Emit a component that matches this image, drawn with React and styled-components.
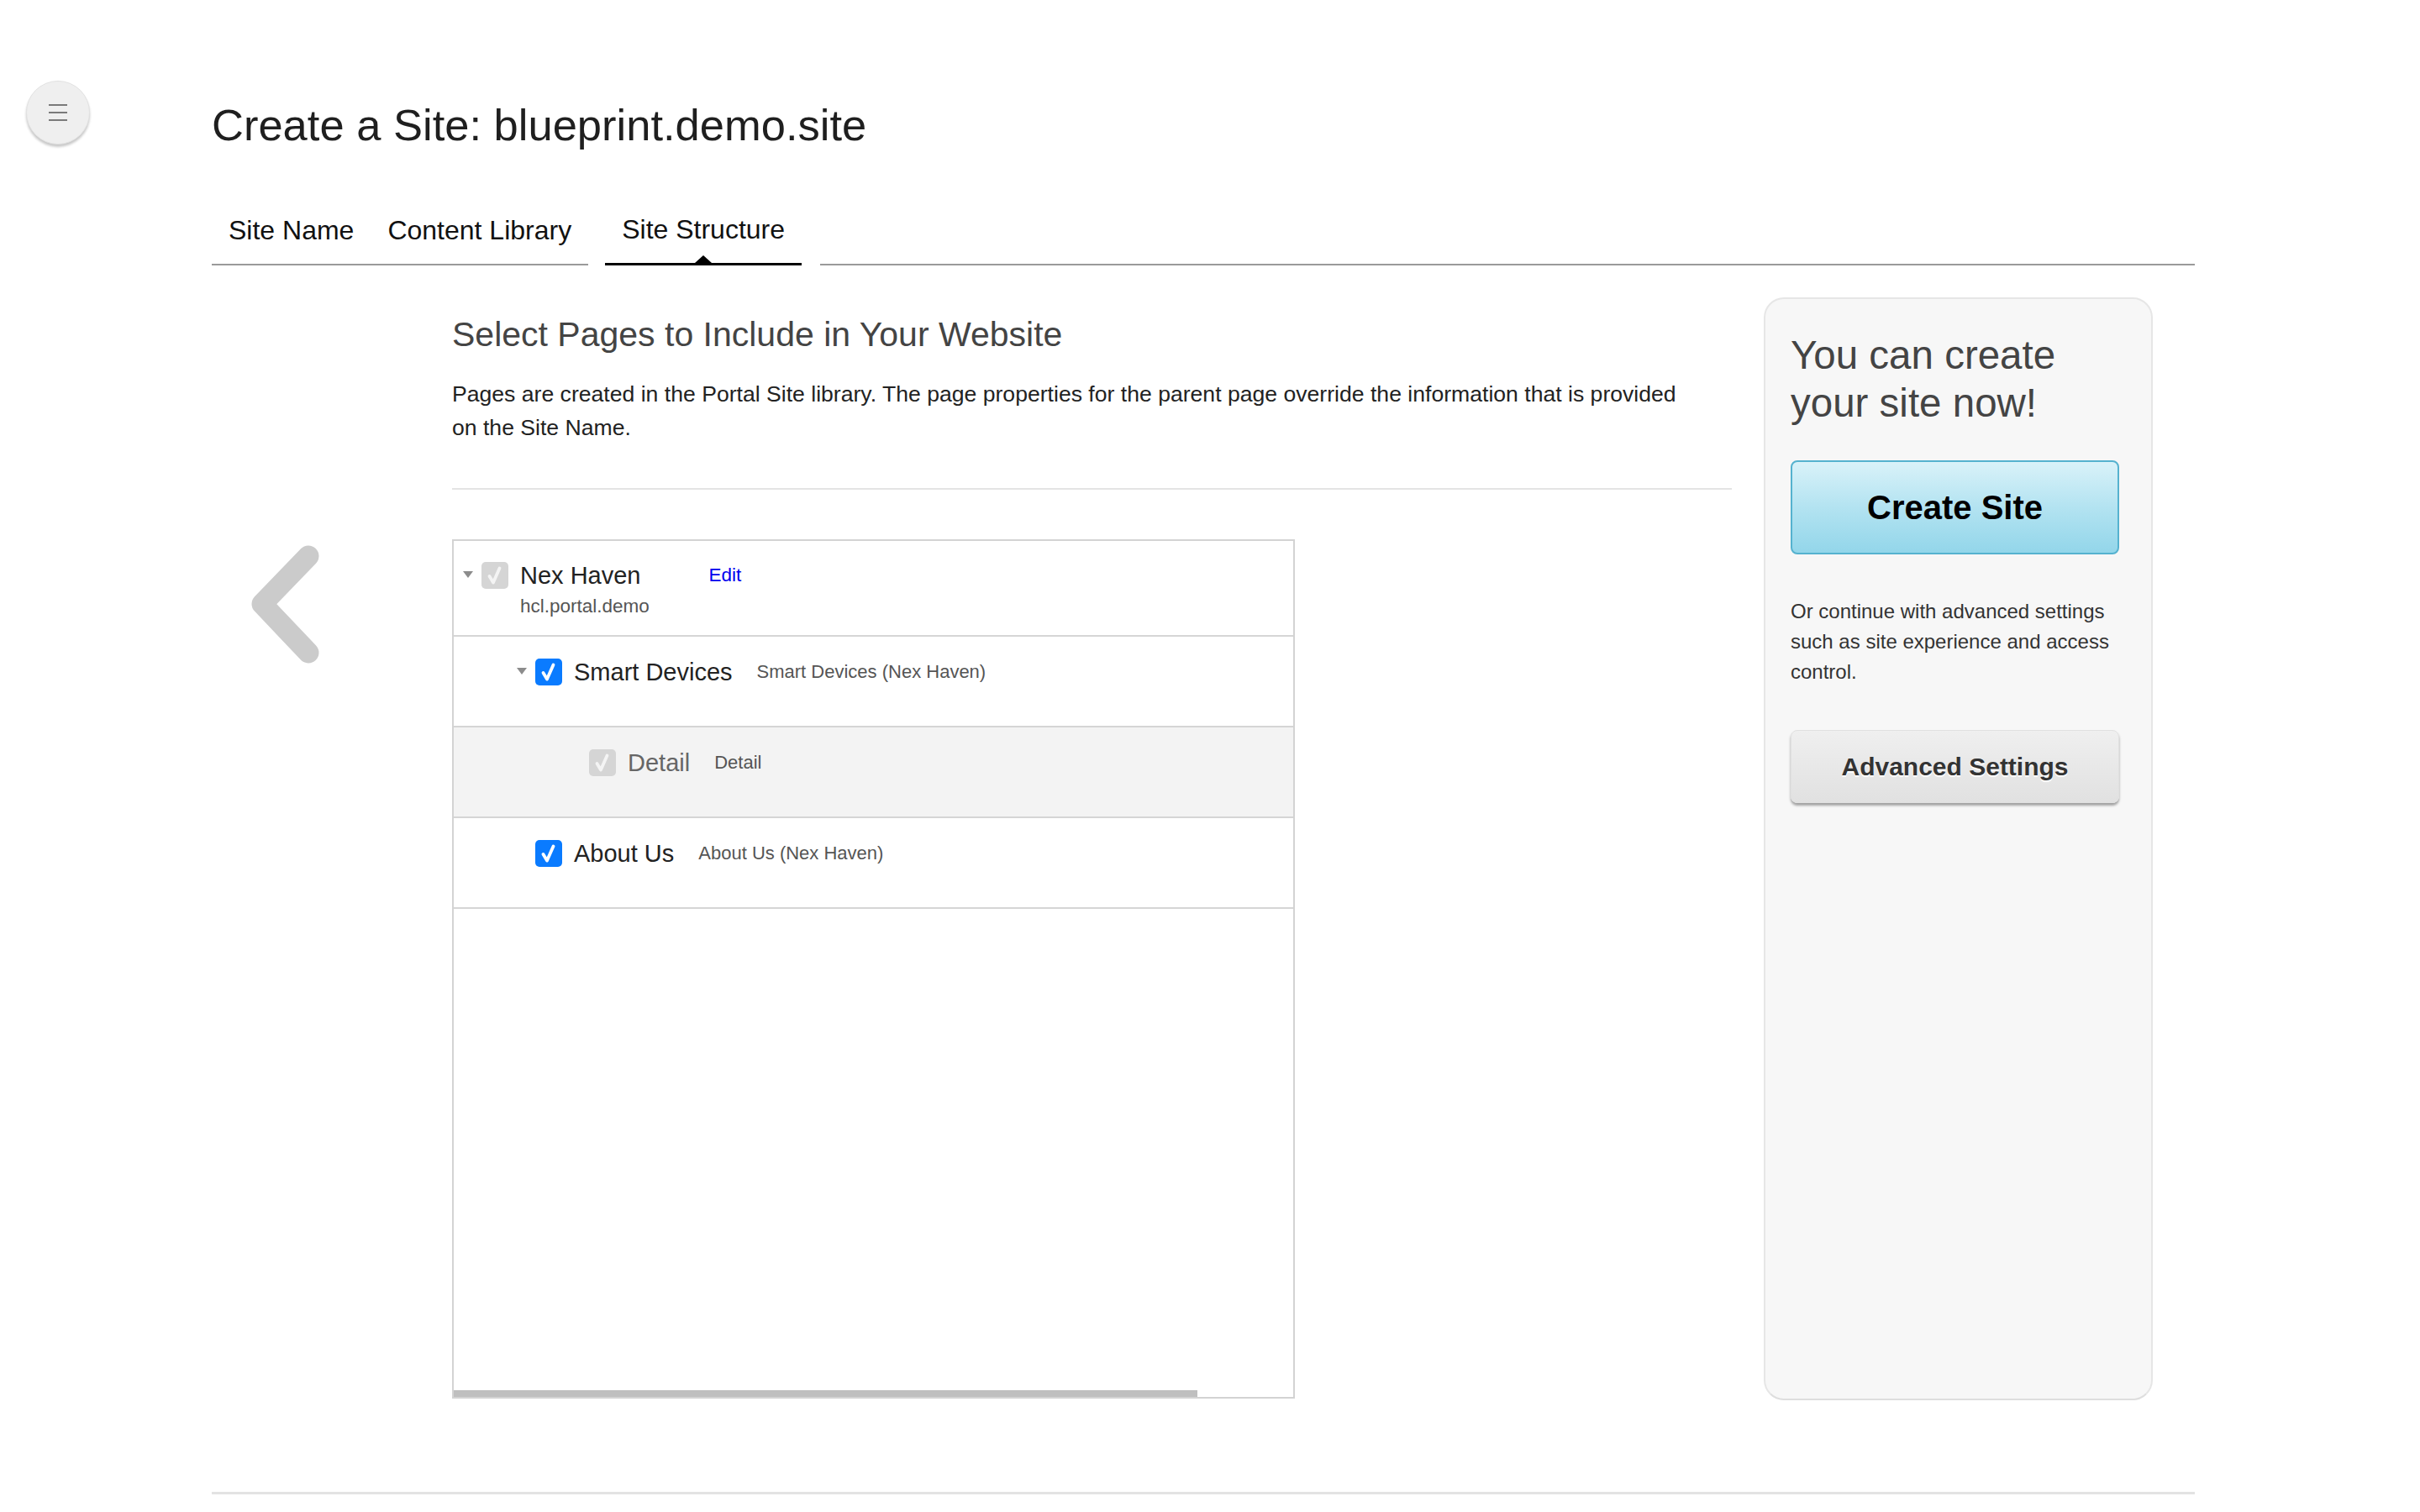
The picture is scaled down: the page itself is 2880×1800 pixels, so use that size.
import styled, { createGlobalStyle } from "styled-components";

const GlobalStyle = createGlobalStyle`
body {
  margin: 0;
  background: #ffffff;
  font-family: "Liberation Sans", Arial, Helvetica, sans-serif;
  color: #222222;
}
* { box-sizing: border-box; }
`;

const Page = styled.div`
display: flex;
flex-direction: row;
min-height: 1800px;
`;

const Rail = styled.div`
width: 252px;
flex-shrink: 0;
padding: 96px 0 0 31px;
`;

const MenuButton = styled.button`
width: 76px;
height: 76px;
border-radius: 50%;
border: 1px solid #e2e2e2;
background: #efefef;
box-shadow: 0 3px 3px rgba(0, 0, 0, 0.22);
display: flex;
flex-direction: column;
justify-content: center;
align-items: center;
gap: 7px;
padding: 0;
cursor: pointer;

span {
  display: block;
  width: 22px;
  height: 2px;
  background: #7a7a7a;
}
`;

const Content = styled.div`
width: 2360px;
padding-top: 119px;
display: flex;
flex-direction: column;
`;

const Title = styled.h1`
margin: 0;
font-size: 52.5px;
line-height: 60px;
font-weight: normal;
color: #1f1f1f;
`;

const TabBar = styled.div`
margin-top: 74px;
display: flex;
flex-direction: row;
align-items: flex-end;
`;

const Tab = styled.div`
position: relative;
padding: 0 20px 20px;
font-size: 32px;
line-height: 40px;
color: #111111;
border-bottom: ${p => (p.$active ? "3px solid #000000" : "2px solid #9a9a9a")};
margin: ${p => (p.$active ? "0 22px 0 20px" : "0")};

&::after {
  content: "";
  display: ${p => (p.$active ? "block" : "none")};
  position: absolute;
  left: 50%;
  bottom: 0;
  transform: translateX(-50%);
  border-left: 10px solid transparent;
  border-right: 10px solid transparent;
  border-bottom: 9px solid #000000;
}
`;

const TabFiller = styled.div`
flex: 1;
border-bottom: 2px solid #9a9a9a;
`;

const Main = styled.div`
display: flex;
flex-direction: row;
align-items: flex-start;
`;

const BackColumn = styled.div`
width: 286px;
flex-shrink: 0;
padding: 333px 0 0 45px;
`;

const Body = styled.div`
width: 1523px;
flex-shrink: 0;
padding-top: 58px;
`;

const SectionTitle = styled.h2`
margin: 0;
font-size: 41px;
line-height: 48px;
font-weight: normal;
color: #444444;
`;

const Intro = styled.p`
margin: 27px 0 0 0;
max-width: 1480px;
font-size: 26.6px;
line-height: 40px;
color: #222222;
`;

const Divider = styled.hr`
margin: 52px 0 0 0;
border: none;
border-top: 2px solid #e4e4e4;
`;

const TreeBox = styled.div`
margin-top: 59px;
width: 1003px;
height: 1023px;
border: 2px solid #d3d3d3;
display: flex;
flex-direction: column;
`;

const Row = styled.div`
display: flex;
flex-direction: column;
padding: ${p => (p.$first ? "21px 0 19px" : "22px 0 44px")};
padding-left: ${p => 11 + p.$level * 64}px;
background: ${p => (p.$shaded ? "#f3f3f3" : "#ffffff")};
border-bottom: 2px solid #d5d5d5;
`;

const LabelLine = styled.div`
display: flex;
flex-direction: row;
align-items: center;
height: 40px;
`;

const CaretSlot = styled.div`
width: 22px;
height: 40px;
display: flex;
align-items: center;
padding-bottom: 2px;

span {
  display: ${p => (p.$show ? "block" : "none")};
  border-left: 6px solid transparent;
  border-right: 6px solid transparent;
  border-top: 8px solid #8c8c8c;
}
`;

const Checkbox = styled.div`
width: 32px;
height: 32px;
border-radius: 5px;
background: ${p => (p.$disabled ? "#d5d5d5" : "#0a7bff")};
display: flex;
justify-content: center;
align-items: center;
flex-shrink: 0;
`;

const Label = styled.span`
margin-left: 14px;
font-size: 29px;
line-height: 40px;
color: ${p => (p.$muted ? "#666666" : "#222222")};
`;

const Description = styled.span`
margin-left: 29px;
font-size: 22px;
line-height: 40px;
color: #555555;
`;

const EditLink = styled.a`
margin-left: 81px;
font-size: 22.5px;
line-height: 40px;
color: #0000ee;
text-decoration: none;
`;

const SubLine = styled.div`
margin: 2px 0 0 68px;
font-size: 22.5px;
line-height: 30px;
color: #555555;
`;

const ScrollTrack = styled.div`
margin-top: auto;
height: 8px;
`;

const ScrollThumb = styled.div`
width: 885px;
height: 8px;
background: #bfbfbf;
`;

const Panel = styled.aside`
margin: 38px 0 0 38px;
width: 463px;
height: 1313px;
flex-shrink: 0;
background: #f7f7f7;
border: 2px solid #e6e6e6;
border-bottom-color: #dedede;
border-radius: 24px;
padding: 38px 38px 0 30px;
display: flex;
flex-direction: column;
`;

const PanelTitle = styled.h3`
margin: 0;
font-size: 47.5px;
line-height: 57px;
font-weight: normal;
color: #444444;
`;

const CreateButton = styled.button`
margin-top: 40px;
width: 100%;
height: 112px;
border: 2px solid #55b2cf;
border-radius: 8px;
background: linear-gradient(to bottom, #d9f2f9 0%, #b3e3f1 50%, #93d6ea 100%);
font-family: "Liberation Sans", Arial, sans-serif;
font-size: 40px;
font-weight: bold;
color: #000000;
cursor: pointer;
`;

const PanelText = styled.p`
margin: 50px 0 0 0;
font-size: 24px;
line-height: 36px;
color: #333333;
`;

const AdvancedButton = styled.button`
margin-top: 51px;
width: 100%;
height: 87px;
border: 1px solid #e0e0e0;
border-radius: 8px;
background: linear-gradient(to bottom, #efefef 0%, #e1e1e1 100%);
box-shadow: 0 3px 3px rgba(0, 0, 0, 0.35);
font-family: "Liberation Sans", Arial, sans-serif;
font-size: 30px;
font-weight: bold;
color: #333333;
text-shadow: 0 2px 1px #ffffff;
cursor: pointer;
`;

const FooterLine = styled.div`
margin-top: 109px;
height: 3px;
background: #e3e3e3;
`;

const pages = [
    { level: 0, caret: true, disabled: true, label: "Nex Haven", edit: true, sub: "hcl.portal.demo" },
    { level: 1, caret: true, label: "Smart Devices", desc: "Smart Devices (Nex Haven)" },
    { level: 2, disabled: true, muted: true, shaded: true, label: "Detail", desc: "Detail" },
    { level: 1, label: "About Us", desc: "About Us (Nex Haven)" },
];

const CheckMark = ({ disabled }) => (
    <svg width="32" height="32" viewBox="0 0 32 32">
        <path
            d="M9.5 17 L14 24.5 L21.5 7.5"
            fill="none"
            stroke={disabled ? "#f4f4f4" : "#ffffff"}
            strokeWidth="3.8"
            strokeLinecap="round"
            strokeLinejoin="round"
        />
    </svg>
);

const App = () => {
    return (
        <>
            <GlobalStyle />
            <Page>
                <Rail>
                    <MenuButton aria-label="Menu">
                        <span />
                        <span />
                        <span />
                    </MenuButton>
                </Rail>
                <Content>
                    <Title>Create a Site: blueprint.demo.site</Title>
                    <TabBar>
                        <Tab>Site Name</Tab>
                        <Tab>Content Library</Tab>
                        <Tab $active>Site Structure</Tab>
                        <TabFiller />
                    </TabBar>
                    <Main>
                        <BackColumn>
                            {/* back arrow */}
                            <svg width="90" height="142" viewBox="0 0 90 142">
                                <polyline
                                    points="70,13 15,70 70,128"
                                    fill="none"
                                    stroke="#cbcbcb"
                                    strokeWidth="25"
                                    strokeLinecap="round"
                                    strokeLinejoin="round"
                                />
                            </svg>
                        </BackColumn>
                        <Body>
                            <SectionTitle>Select Pages to Include in Your Website</SectionTitle>
                            <Intro>
                                Pages are created in the Portal Site library. The page properties for the parent page override the information that is provided on the Site Name.
                            </Intro>
                            <Divider />
                            <TreeBox>
                                {pages.map((page, i) => (
                                    <Row key={page.label} $level={page.level} $first={i === 0} $shaded={page.shaded}>
                                        <LabelLine>
                                            <CaretSlot $show={page.caret}>
                                                <span />
                                            </CaretSlot>
                                            <Checkbox $disabled={page.disabled}>
                                                <CheckMark disabled={page.disabled} />
                                            </Checkbox>
                                            <Label $muted={page.muted}>{page.label}</Label>
                                            {page.edit && <EditLink href="#">Edit</EditLink>}
                                            {page.desc && <Description>{page.desc}</Description>}
                                        </LabelLine>
                                        {page.sub && <SubLine>{page.sub}</SubLine>}
                                    </Row>
                                ))}
                                <ScrollTrack>
                                    <ScrollThumb />
                                </ScrollTrack>
                            </TreeBox>
                        </Body>
                        <Panel>
                            <PanelTitle>You can create your site now!</PanelTitle>
                            <CreateButton>Create Site</CreateButton>
                            <PanelText>
                                Or continue with advanced settings such as site experience and access control.
                            </PanelText>
                            <AdvancedButton>Advanced Settings</AdvancedButton>
                        </Panel>
                    </Main>
                    <FooterLine />
                </Content>
            </Page>
        </>
    );
};

export default App;
